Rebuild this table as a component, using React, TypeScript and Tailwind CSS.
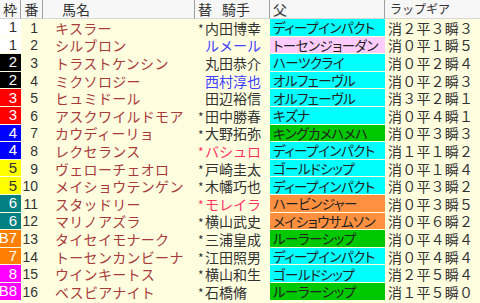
import React from 'react';

type Row = {
  waku: string;
  ban: number;
  name: string;
  mark: boolean;
  jockey: string;
  jc: 'n' | 'b' | 'r';
  sire: string;
  sc: 'c' | 'p' | 'g' | 'o';
  gear: string;
};

const rows: Row[] = [
  { waku: '1', ban: 1, name: 'キスラー', mark: true, jockey: '内田博幸', jc: 'n', sire: 'ディープインパクト', sc: 'c', gear: '消２平３瞬３' },
  { waku: '1', ban: 2, name: 'シルブロン', mark: false, jockey: 'ルメール', jc: 'b', sire: 'トーセンジョーダン', sc: 'p', gear: '消０平１瞬５' },
  { waku: '2', ban: 3, name: 'トラストケンシン', mark: false, jockey: '丸田恭介', jc: 'n', sire: 'ハーツクライ', sc: 'c', gear: '消０平２瞬４' },
  { waku: '2', ban: 4, name: 'ミクソロジー', mark: false, jockey: '西村淳也', jc: 'b', sire: 'オルフェーヴル', sc: 'c', gear: '消０平２瞬３' },
  { waku: '3', ban: 5, name: 'ヒュミドール', mark: false, jockey: '田辺裕信', jc: 'n', sire: 'オルフェーヴル', sc: 'c', gear: '消３平２瞬１' },
  { waku: '3', ban: 6, name: 'アスクワイルドモア', mark: true, jockey: '田中勝春', jc: 'n', sire: 'キズナ', sc: 'c', gear: '消０平４瞬１' },
  { waku: '4', ban: 7, name: 'カウディーリョ', mark: true, jockey: '大野拓弥', jc: 'n', sire: 'キングカメハメハ', sc: 'g', gear: '消０平３瞬３' },
  { waku: '4', ban: 8, name: 'レクセランス', mark: true, jockey: 'バシュロ', jc: 'r', sire: 'ディープインパクト', sc: 'c', gear: '消１平１瞬２' },
  { waku: '5', ban: 9, name: 'ヴェローチェオロ', mark: true, jockey: '戸崎圭太', jc: 'n', sire: 'ゴールドシップ', sc: 'c', gear: '消０平１瞬４' },
  { waku: '5', ban: 10, name: 'メイショウテンゲン', mark: true, jockey: '木幡巧也', jc: 'n', sire: 'ディープインパクト', sc: 'c', gear: '消０平３瞬２' },
  { waku: '6', ban: 11, name: 'スタッドリー', mark: true, jockey: 'モレイラ', jc: 'r', sire: 'ハービンジャー', sc: 'o', gear: '消０平３瞬５' },
  { waku: '6', ban: 12, name: 'マリノアズラ', mark: true, jockey: '横山武史', jc: 'n', sire: 'メイショウサムソン', sc: 'o', gear: '消０平６瞬２' },
  { waku: 'B7', ban: 13, name: 'タイセイモナーク', mark: true, jockey: '三浦皇成', jc: 'n', sire: 'ルーラーシップ', sc: 'g', gear: '消０平４瞬４' },
  { waku: '7', ban: 14, name: 'トーセンカンビーナ', mark: true, jockey: '江田照男', jc: 'n', sire: 'ディープインパクト', sc: 'c', gear: '消０平４瞬４' },
  { waku: '8', ban: 15, name: 'ウインキートス', mark: true, jockey: '横山和生', jc: 'n', sire: 'ゴールドシップ', sc: 'c', gear: '消２平５瞬４' },
  { waku: 'B8', ban: 16, name: 'ベスビアナイト', mark: true, jockey: '石橋脩', jc: 'n', sire: 'ルーラーシップ', sc: 'g', gear: '消１平５瞬０' },
];

const wakuStyle: Record<string, string> = {
  '1': 'bg-white text-[#333333]',
  '2': 'bg-black text-white',
  '3': 'bg-[#ff0000] text-white',
  '4': 'bg-[#0000ff] text-white',
  '5': 'bg-[#ffff00] text-[#333333]',
  '6': 'bg-[#008080] text-white',
  '7': 'bg-[#ff8000] text-white',
  '8': 'bg-[#ff00ff] text-white',
};

const sireStyle = {
  c: 'bg-[#00ffff]',
  p: 'bg-[#ffccff]',
  g: 'bg-[#00c800]',
  o: 'bg-[#ff9040]',
};

const jockeyColor = {
  n: 'text-[#333333]',
  b: 'text-[#4040ff]',
  r: 'text-[#ff3366]',
};

function HeaderCell({ children, className = '' }: { children?: React.ReactNode; className?: string }) {
  return (
    <div className={`flex items-center bg-[#f7f7f7] border-b border-b-[#d8d8d8] border-r border-r-[#a0a0a0] text-[#333333] ${className}`}>
      {children}
    </div>
  );
}

export default function App() {
  return (
    <div
      className="w-[480px] h-[303px] bg-[#ffffe0] overflow-hidden grid grid-cols-[21px_22px_152px_75px_115px_95px] grid-rows-[19px_repeat(16,17.6px)] text-[14px] leading-[16px]"
      style={{ fontFamily: '"Noto Sans CJK JP", "Noto Sans", sans-serif' }}
    >
      {/* header */}
      <HeaderCell className="justify-center">枠</HeaderCell>
      <HeaderCell className="justify-center">番</HeaderCell>
      <HeaderCell className="pl-[19px]">馬名</HeaderCell>
      <HeaderCell className="pl-[3px]">
        <span>替</span>
        <span className="ml-[10px]">騎手</span>
      </HeaderCell>
      <HeaderCell className="pl-[3px]">父</HeaderCell>
      <div className="flex items-center bg-[#f7f7f7] border-b border-b-[#d8d8d8] pl-[5px] text-[12px] text-[#333333]">ラップギア</div>

      {rows.map((r) => {
        const wk = r.waku.replace('B', '');
        return (
          <React.Fragment key={r.ban}>
            <div
              className={`flex items-center justify-end pr-[4px] border-b border-b-[#ffffe0] text-[15px] ${wakuStyle[wk]}`}
              style={{ fontFamily: '"Liberation Sans", sans-serif' }}
            >
              {r.waku}
            </div>
            <div
              className="flex items-center justify-end pr-[5px] text-[14px] text-[#333333]"
              style={{ fontFamily: '"Liberation Sans", sans-serif' }}
            >
              {r.ban}
            </div>
            <div className="flex items-center pl-[12px] text-[#a83a3a] whitespace-nowrap tracking-[0.3px]">
              {r.name}
            </div>
            <div className="flex items-center whitespace-nowrap">
              <span className={`w-[10px] pl-[3px] self-start pt-[2px] text-[12px] ${r.jc === 'r' ? 'text-[#ff3366]' : 'text-[#333333]'}`}>
                {r.mark ? '*' : ''}
              </span>
              <span className={jockeyColor[r.jc]}>{r.jockey}</span>
            </div>
            <div
              className={`flex items-center pl-[3px] border-b border-b-[#ffffe0] text-[#222222] whitespace-nowrap [font-feature-settings:'palt'] text-[13.5px] tracking-[-0.5px] ${sireStyle[r.sc]}`}
            >
              {r.sire}
            </div>
            <div className="flex items-center pl-[3px] text-[#333333] whitespace-nowrap tracking-[0.2px]">{r.gear}</div>
          </React.Fragment>
        );
      })}
    </div>
  );
}
